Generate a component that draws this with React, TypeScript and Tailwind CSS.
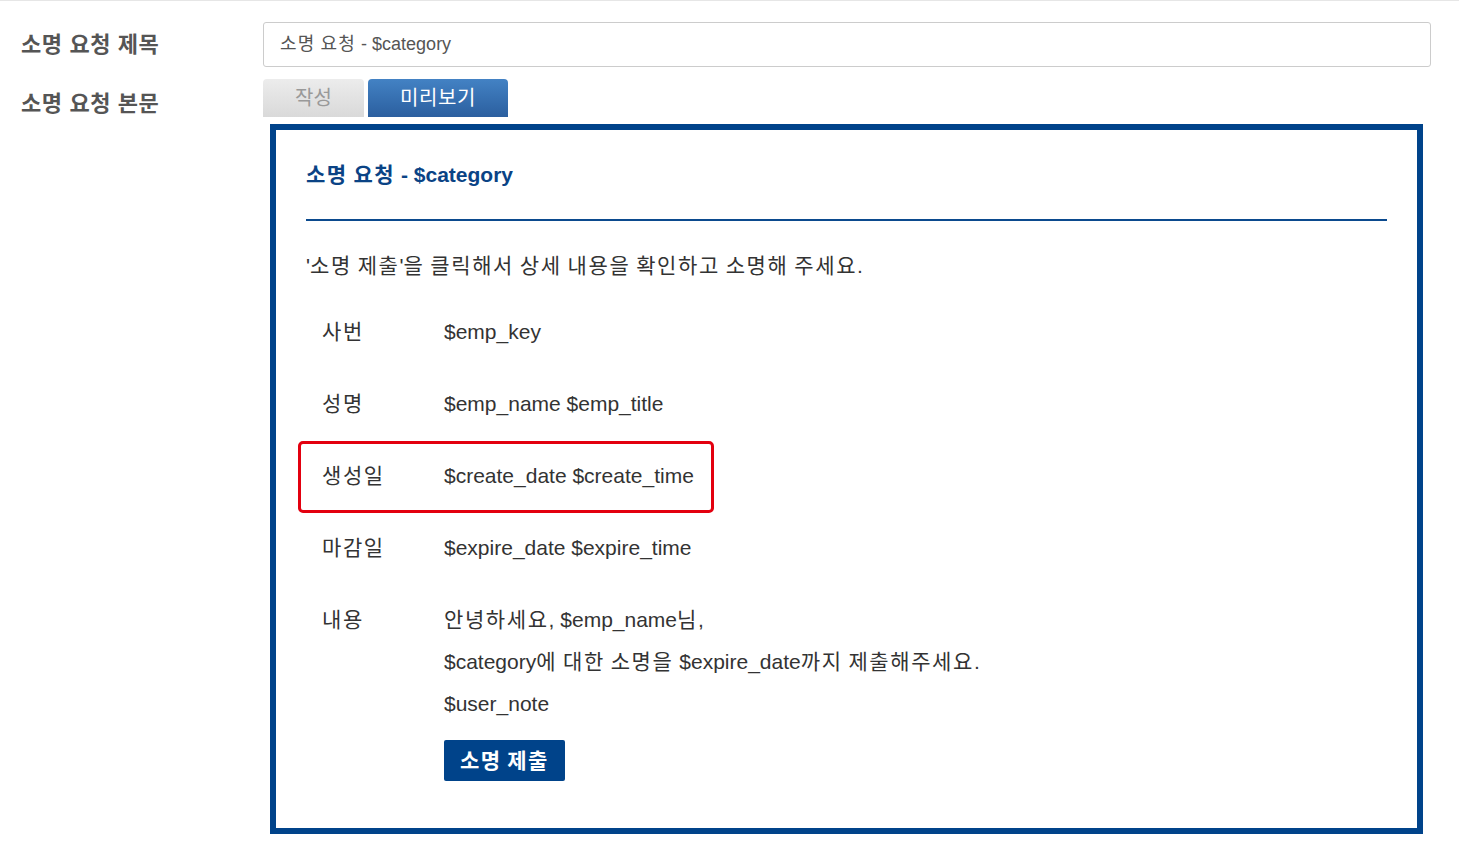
import React from "react";

const font = { fontFamily: '"Liberation Sans", Arial, "Noto Sans CJK KR", sans-serif' };

// hangul in the reference font runs a bit wider than Noto's, so pad those runs
function Ko({ text, cls }: { text: string; cls: string }) {
    const parts = text.split(/([\uac00-\ud7a3]+)/);
    return (
        <span>
            {parts.map((p, i) =>
                /[\uac00-\ud7a3]/.test(p) ? (
                    <span key={i} className={cls}>{p}</span>
                ) : (
                    <React.Fragment key={i}>{p}</React.Fragment>
                )
            )}
        </span>
    );
}

const rows = [
    { label: "사번", value: "$emp_key" },
    { label: "성명", value: "$emp_name $emp_title" },
    { label: "생성일", value: "$create_date $create_time", marked: true },
    { label: "마감일", value: "$expire_date $expire_time" },
];

const K = "tracking-[1.6px]";

export default function App() {
    return (
        <div style={font} className="min-h-screen bg-white border-t border-[#e6e6e6]">
            <div className="flex pt-[21px]">
                <div className="w-[263px] shrink-0 pl-[21px]">
                    <div className="h-[45px] flex items-center text-[22px] tracking-[0.6px] font-bold text-[#555]">소명 요청 제목</div>
                    <div className="h-[45px] mt-[12px] flex items-center pt-[4px] text-[22px] tracking-[0.6px] font-bold text-[#555]">소명 요청 본문</div>
                </div>

                <div className="w-[1168px]">
                    <div className="h-[45px] border border-[#ccc] rounded-[3px] flex items-center px-[16px] text-[18px] text-[#555]">
                        <Ko text="소명 요청 - $category" cls="tracking-[1.2px]" />
                    </div>

                    <div className="flex gap-[4px] mt-[12px]">
                        <button className="w-[101px] h-[38px] rounded-t-[4px] bg-gradient-to-b from-[#ececec] to-[#d9d9d9] text-[20px] text-[#999]">작성</button>
                        <button className="w-[140px] h-[38px] rounded-t-[4px] bg-gradient-to-b from-[#4382c4] to-[#2b5f9f] text-[20px] tracking-[0.6px] text-white">미리보기</button>
                    </div>

                    <div className="ml-[7px] mt-[7px] w-[1153px] border-[6px] border-[#00438a] px-[30px] pt-[31px] pb-[46px]">
                        <h2 className="text-[21px] leading-[28px] font-bold text-[#0a4385]">
                            <Ko text="소명 요청 - $category" cls="tracking-[1.5px]" />
                        </h2>
                        <div className="mt-[30px] h-[2px] bg-[#0b4a8e]" />
                        <p className="mt-[31px] text-[21px] leading-[28px] text-[#333]">
                            <Ko text="'소명 제출'을 클릭해서 상세 내용을 확인하고 소명해 주세요." cls={K} />
                        </p>

                        <div className="mt-[16px] text-[21px] text-[#333]">
                            {rows.map((r) => (
                                <div key={r.label} className="relative h-[72px] flex items-center">
                                    <div className="w-[138px] pl-[16px]"><Ko text={r.label} cls={K} /></div>
                                    <div>{r.value}</div>
                                    {r.marked && (
                                        <div className="absolute left-[-8px] top-[1px] w-[416px] h-[72px] border-[3px] border-[#e3000f] rounded-[5px]" />
                                    )}
                                </div>
                            ))}
                            <div className="flex pt-[15px] leading-[42px]">
                                <div className="w-[138px] pl-[16px]"><Ko text="내용" cls={K} /></div>
                                <div>
                                    <div><Ko text="안녕하세요, $emp_name님," cls={K} /></div>
                                    <div><Ko text="$category에 대한 소명을 $expire_date까지 제출해주세요." cls={K} /></div>
                                    <div>$user_note</div>
                                    <button className="mt-[15px] h-[41px] px-[16px] bg-[#00438a] rounded-[2px] text-white font-bold text-[21px] leading-[41px]">
                                        <Ko text="소명 제출" cls="tracking-[1.4px]" />
                                    </button>
                                </div>
                            </div>
                        </div>
                    </div>
                </div>
            </div>
        </div>
    );
}
